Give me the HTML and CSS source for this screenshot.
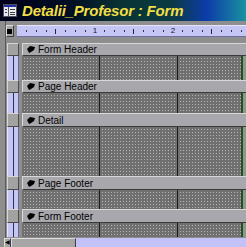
FILE: index.html
```html
<!DOCTYPE html>
<html lang="ro">
<head>
    <meta charset="UTF-8">
    <title>Detalii_Profesor : Form</title>
    <link rel="stylesheet" href="styles.css">
</head>
<body>
    <div class="titlebar">
        <svg class="form-icon" width="14" height="13" viewBox="0 0 14 13">
            <rect x="0.5" y="0.5" width="13" height="12" fill="#e8e8f0" stroke="#505060"/>
            <rect x="1" y="1" width="12" height="2" fill="#2030a0"/>
            <line x1="5.5" y1="3" x2="5.5" y2="12" stroke="#505060"/>
            <line x1="2" y1="5.5" x2="4" y2="5.5" stroke="#404040"/>
            <line x1="2" y1="8.5" x2="4" y2="8.5" stroke="#404040"/>
            <line x1="7" y1="5.5" x2="12" y2="5.5" stroke="#404040"/>
            <line x1="7" y1="8.5" x2="12" y2="8.5" stroke="#404040"/>
            <line x1="7" y1="10.5" x2="12" y2="10.5" stroke="#404040"/>
        </svg>
        <span class="title">Detalii_Profesor : Form</span>
    </div>

    <div class="design">
        <div class="toprow">
            <div class="corner"><span class="corner-mark"></span></div>
            <div class="hruler">
                <span class="tk"><i class="dot"></i></span>
                <span class="tk"><i class="dot"></i></span>
                <span class="tk"><i class="dot"></i></span>
                <span class="tk"><i class="long"></i></span>
                <span class="tk"><i class="dot"></i></span>
                <span class="tk"><i class="dot"></i></span>
                <span class="tk"><i class="dot"></i></span>
                <span class="tk num">1</span>
                <span class="tk"><i class="dot"></i></span>
                <span class="tk"><i class="dot"></i></span>
                <span class="tk"><i class="dot"></i></span>
                <span class="tk"><i class="long"></i></span>
                <span class="tk"><i class="dot"></i></span>
                <span class="tk"><i class="dot"></i></span>
                <span class="tk"><i class="dot"></i></span>
                <span class="tk num">2</span>
                <span class="tk"><i class="dot"></i></span>
                <span class="tk"><i class="dot"></i></span>
                <span class="tk"><i class="dot"></i></span>
                <span class="tk"><i class="long"></i></span>
                <span class="tk"><i class="dot"></i></span>
                <span class="tk"><i class="dot"></i></span>
                <span class="tk"><i class="dot"></i></span>
            </div>
        </div>

        <div class="row h13">
            <div class="vr vr-box"></div>
            <div class="bar"><svg class="hand" width="8" height="7" viewBox="0 0 8 7"><polygon points="0,3 3,0 8,1 7,4 4,6 2,7" fill="#000"/></svg>Form Header</div>
        </div>
        <div class="row h24">
            <div class="vr vr-ruler"></div>
            <div class="grid"></div><div class="edge"></div>
        </div>

        <div class="row h13">
            <div class="vr vr-box"></div>
            <div class="bar"><svg class="hand" width="8" height="7" viewBox="0 0 8 7"><polygon points="0,3 3,0 8,1 7,4 4,6 2,7" fill="#000"/></svg>Page Header</div>
        </div>
        <div class="row h20">
            <div class="vr vr-ruler"></div>
            <div class="grid"></div><div class="edge"></div>
        </div>

        <div class="row h14">
            <div class="vr vr-box"></div>
            <div class="bar"><svg class="hand" width="8" height="7" viewBox="0 0 8 7"><polygon points="0,3 3,0 8,1 7,4 4,6 2,7" fill="#000"/></svg>Detail</div>
        </div>
        <div class="row h49">
            <div class="vr vr-ruler"></div>
            <div class="grid"></div><div class="edge"></div>
        </div>

        <div class="row h14">
            <div class="vr vr-box"></div>
            <div class="bar"><svg class="hand" width="8" height="7" viewBox="0 0 8 7"><polygon points="0,3 3,0 8,1 7,4 4,6 2,7" fill="#000"/></svg>Page Footer</div>
        </div>
        <div class="row h19">
            <div class="vr vr-ruler"></div>
            <div class="grid"></div><div class="edge"></div>
        </div>

        <div class="row h14">
            <div class="vr vr-box"></div>
            <div class="bar"><svg class="hand" width="8" height="7" viewBox="0 0 8 7"><polygon points="0,3 3,0 8,1 7,4 4,6 2,7" fill="#000"/></svg>Form Footer</div>
        </div>
        <div class="row h14">
            <div class="vr vr-ruler"></div>
            <div class="grid"></div><div class="edge"></div>
        </div>

        <div class="scroll">
            <div class="sc-btn">&#9664;</div>
            <div class="sc-thumb"></div>
            <div class="sc-track"></div>
        </div>
    </div>
</body>
</html>
```

FILE: styles.css
```css
*{
    margin:0;padding:0;box-sizing:border-box;
}
body{
    width:246px;
    height:247px;
    overflow:hidden;
    background-color:#8e8e8e;
    font-family:"Liberation Sans", Arial, sans-serif;
}
.titlebar{
    height:21px;
    display:flex;
    align-items:center;
    gap:5px;
    padding-left:3px;
    background:linear-gradient(90deg,#00001a 0%,#001024 30%,#0a3434 50%,#0b3a44 70%,#0c3ca8 84%,#1a92a0 100%);
}
.title{
    color:#f2de46;
    font-weight:bold;
    font-style:italic;
    font-size:15px;
    letter-spacing:-0.2px;
}
.design{
    padding-top:4px;
    border-left:1px solid #5a5a5a;
    margin-left:5px;
}
.toprow{
    display:flex;
    height:12px;
    margin-bottom:6px;
}
.corner{
    width:13px;
    height:12px;
    margin-right:3px;
    background-color:#a6a6a6;
    border-top:1px solid #dcdcdc;
    border-left:1px solid #dcdcdc;
    border-bottom:1px solid #404040;
    border-right:1px solid #404040;
    display:flex;
    align-items:center;
    justify-content:center;
}
.corner-mark{
    width:5px;height:5px;background-color:#000;
}
.hruler{
    flex:1;
    display:flex;
    align-items:center;
    padding-left:4.9px;
    background-color:#c6c6f4;
    border-top:1px solid #e6e6ff;
    border-bottom:1px solid #7070a0;
}
.tk{
    width:9.75px;
    flex:none;
    display:flex;
    justify-content:center;
    align-items:center;
    height:10px;
}
.tk .dot{
    width:1px;height:2px;background-color:#303050;
}
.tk .long{
    width:1px;height:5px;background-color:#202040;
}
.tk.num{
    font-size:8px;
    color:#101030;
    line-height:10px;
}
.row{
    display:flex;
}
.h13{height:13px}
.h14{height:14px}
.h19{height:19px}
.h20{height:20px}
.h24{height:24px}
.h49{height:49px}
.vr{
    width:12px;
    margin-left:1px;
    margin-right:3px;
    flex:none;
}
.vr-box{
    background-color:#a2a2a2;
    border-top:1px solid #d6d6d6;
    border-left:1px solid #d6d6d6;
    border-bottom:1px solid #4a4a4a;
    border-right:1px solid #4a4a4a;
}
.vr-ruler{
    background-color:#c6c6f4;
    background-image:linear-gradient(90deg,transparent 5px,#303050 5px,#303050 6px,transparent 6px);
    background-size:10px 9.75px;
    background-repeat:repeat-y;
    background-position:0 4px;
    border-left:1px solid #e6e6ff;
    border-right:1px solid #6a6a9a;
}
.bar{
    flex:1;
    display:flex;
    align-items:center;
    gap:3px;
    padding-left:4px;
    font-size:10px;
    color:#000;
    background-color:#a8a8ac;
    border-top:1px solid #d8d8d8;
    border-left:1px solid #d8d8d8;
    border-bottom:1px solid #3a3a3a;
}
.hand{
    flex:none;
}
.grid{
    width:219px;
    flex:none;
    background-color:#b4b4b4;
    background-image:
        linear-gradient(90deg,transparent 77px,#1c1c1c 77px,#1c1c1c 78px,transparent 78px),
        linear-gradient(90deg,#707070 2px,transparent 2px),
        linear-gradient(180deg,#707070 2px,transparent 2px);
    background-size:78px 100%,3px 3px,3px 3px;
}
.edge{
    flex:1;
    background-color:#8a9a8a;
    border-left:2px solid #2a4a2a;
}
.scroll{
    display:flex;
    height:9px;
    margin-top:1px;
}
.sc-btn{
    width:7px;
    margin-left:-2px;
    font-size:6px;
    line-height:7px;
    text-align:center;
    background-color:#a6a6a6;
    border-top:1px solid #dcdcdc;
    border-left:1px solid #dcdcdc;
    border-right:1px solid #404040;
}
.sc-thumb{
    width:65px;
    background-color:#a6a6a6;
    border-top:1px solid #dcdcdc;
    border-left:1px solid #dcdcdc;
    border-right:1px solid #404040;
}
.sc-track{
    flex:1;
    background-color:#c2c2f8;
}
```
